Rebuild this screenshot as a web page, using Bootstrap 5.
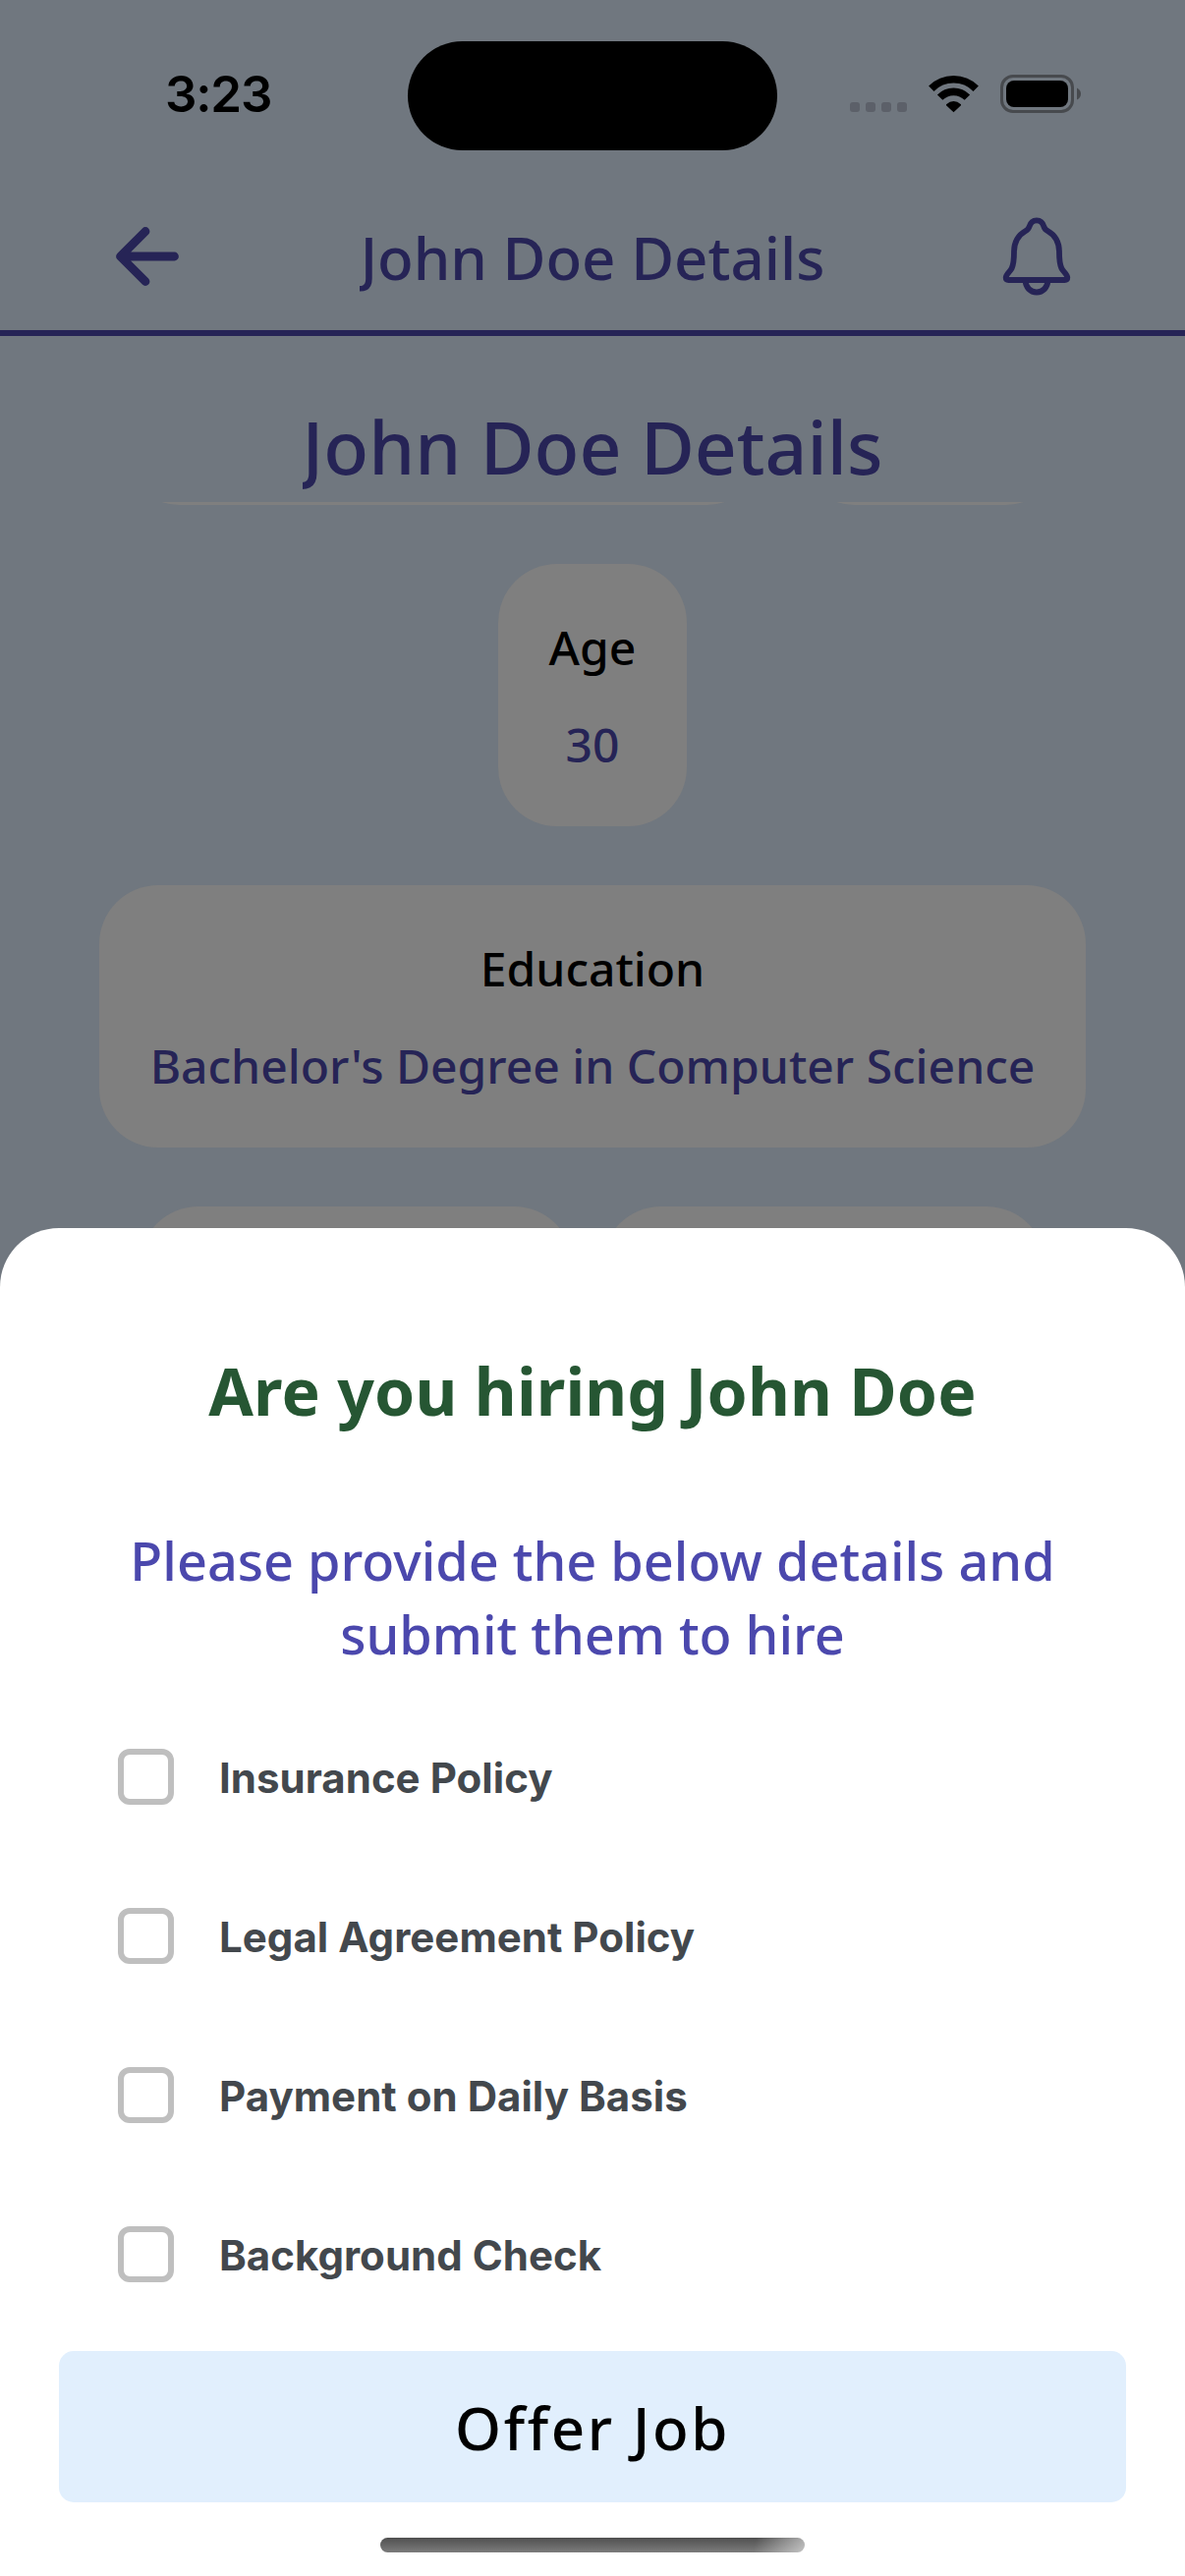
<!DOCTYPE html>
<html lang="en">
<head>
<meta charset="utf-8">
<meta name="viewport" content="width=device-width, initial-scale=1">
<title>John Doe Details</title>
<link href="https://cdn.jsdelivr.net/npm/bootstrap@5.3.0/dist/css/bootstrap.min.css" rel="stylesheet">
<style>
  :root { --ink: #262456; --dim: #70777f; --tile: #7f7f7f; }
  body { margin: 0; font-family: "Noto Sans", sans-serif; font-weight: 500; }
  .phone { width: 1206px; height: 2622px; background: var(--dim); color: var(--ink); }
  .statusbar { height: 186px; }
  .clock { font: 600 51px/60px Inter, sans-serif; color: #000; margin-left: 168px; margin-top: 66px; letter-spacing: -1.2px; }
  .island { width: 376px; height: 111px; border-radius: 56px; left: 415px; top: 42px; background: #000; }
  .status-icons { margin-top: 72px; margin-right: 104px; }
  .topbar { height: 156px; border-bottom: 6px solid var(--ink); padding: 0 114px 0 115px; }
  .topbar-title { font-size: 60px; line-height: 82px; padding-top: 2px; }
  .page-title { height: 169px; padding-top: 55px; font-size: 75px; line-height: 115px; }
  .clip { display: inline-block; overflow: hidden; vertical-align: top; }
  .topbar-title .clip { padding: 0 1px; }
  .sliver { height: 3px; gap: 31px; }
  .tile { background: var(--tile); border-radius: 60px; height: 267px; padding: 0 51px; gap: 34px; font-size: 48px; line-height: 65px; }
  .sheet { height: 1372px; border-radius: 60px 60px 0 0; background: #fff; padding: 0 60px; }
  .sheet-title { font-size: 66px; font-weight: 700; line-height: 90px; color: #265633; margin-top: 120px; letter-spacing: .15px; }
  .sheet-text { font-size: 54px; line-height: 75px; color: #4b48ad; margin-top: 91px; margin-bottom: 26px; }
  .option { height: 162px; padding-left: 60px; gap: 46px; font: 700 42px/60px Inter, sans-serif; letter-spacing: .03px; color: #43484d; }
  .option span { padding-top: 3px; }
  .option .form-check-input { width: 57px; height: 57px; border: 6px solid #bfbfbf; border-radius: 12px; }
  .offer { height: 154px; border-radius: 15px; background: #e1effd; font-size: 60px; line-height: 82px; font-weight: 500; letter-spacing: 2.6px; margin-top: 18px; font-family: inherit; }
  .offer span { display: block; padding-top: 2px; }
  .home-bar { width: 432px; height: 15px; border-radius: 8px; margin: 36px auto 0;
    background: linear-gradient(100deg, transparent 88%, rgba(255,255,255,.55) 100%), linear-gradient(#505050, #7c7c7c); }
</style>
</head>
<body>
<div class="phone position-relative overflow-hidden">
  <div class="statusbar d-flex justify-content-between align-items-start">
    <div class="clock">3:23</div>
    <div class="island position-absolute"></div>
    <svg class="status-icons" width="238" height="48" viewBox="864 72 238 48">
      <g fill="#5c6069"><rect x="865" y="104" width="10" height="10" rx="3"/><rect x="881" y="104" width="10" height="10" rx="3"/><rect x="897" y="104" width="10" height="10" rx="3"/><rect x="913" y="104" width="10" height="10" rx="3"/></g>
      <g fill="none" stroke="#000" stroke-width="7.6">
        <path d="M947.8 90.2a32 32 0 0 1 45.400 0"/>
        <path d="M956.6 99.200a19.500 19.500 0 0 1 27.800 0"/>
      </g>
      <path d="M963 106.300q7.500-6.500 15 0l0 1-7.500 7-7.500-7z"/>
      <rect x="1019.500" y="77.500" width="72" height="36" rx="11.500" fill="none" stroke="#474a4e" stroke-width="3"/>
      <rect x="1024" y="82" width="63" height="27" rx="8"/>
      <path d="M1096 89.500q4 2 4 6t-4 6z" fill="#474a4e"/>
    </svg>
  </div>

  <header class="topbar d-flex justify-content-between align-items-center position-relative">
    <svg width="70" height="66" viewBox="115 228 70 66" fill="none" stroke="#262456" stroke-width="8.800" stroke-linecap="round" stroke-linejoin="round"><path d="M148 235.500L122.500 261l25.500 25.500M123 261h54.500"/></svg>
    <div class="topbar-title position-absolute start-0 end-0 text-center"><span class="clip">John Doe Details</span></div>
    <svg width="74" height="84" viewBox="1018 219 74 84" fill="none" stroke="#262456" stroke-width="5.800" stroke-linejoin="round"><path d="M1055 224.300c-4 0-6.500 3-7.500 6.500-.7 2.300-2 3.300-4 4.400-8.500 4.800-11.500 11.500-11.500 21.300 0 8-.5 12.500-2.300 16.500-1.700 3.700-6 6-6 9.500 0 1.500 1 2.500 2.800 2.500h57c1.800 0 2.800-1 2.800-2.500 0-3.500-4.300-5.800-6-9.500-1.800-4-2.300-8.500-2.300-16.500 0-9.800-3-16.500-11.500-21.300-2-1.100-3.300-2.100-4-4.400-1-3.500-3.500-6.500-7.500-6.500z"/><path d="M1043.700 285.500c0 7 5 12 11.300 12s11.300-5 11.300-12"/></svg>
  </header>

  <div class="page-title text-center"><span class="clip">John Doe Details</span></div>

  <main class="d-flex flex-column align-items-center">
    <div class="sliver d-flex align-items-end overflow-hidden">
      <div class="tile" style="width:656px"></div>
      <div class="tile" style="width:273px"></div>
    </div>
    <div class="tile d-flex flex-column justify-content-center text-center" style="margin-top:60px;width:192px">
      <div class="text-black">Age</div><div>30</div>
    </div>
    <div class="tile d-flex flex-column justify-content-center text-center text-nowrap" style="margin-top:60px;width:1004px">
      <div class="text-black">Education</div><div>Bachelor's Degree in Computer Science</div>
    </div>
    <div class="d-flex" style="margin-top:60px;gap:30px">
      <div class="tile" style="width:441px"></div>
      <div class="tile" style="width:451px"></div>
    </div>
  </main>

  <section class="sheet position-absolute bottom-0 start-0 w-100 d-flex flex-column">
    <div class="sheet-title text-center">Are you hiring John Doe</div>
    <div class="sheet-text text-center">Please provide the below details and<br>submit them to hire</div>
    <label class="option d-flex align-items-center"><input class="form-check-input m-0 flex-shrink-0" type="checkbox"><span>Insurance Policy</span></label>
    <label class="option d-flex align-items-center"><input class="form-check-input m-0 flex-shrink-0" type="checkbox"><span>Legal Agreement Policy</span></label>
    <label class="option d-flex align-items-center"><input class="form-check-input m-0 flex-shrink-0" type="checkbox"><span>Payment on Daily Basis</span></label>
    <label class="option d-flex align-items-center"><input class="form-check-input m-0 flex-shrink-0" type="checkbox"><span>Background Check</span></label>
    <button type="button" class="offer btn w-100 p-0 border-0 text-black"><span>Offer Job</span></button>
    <div class="home-bar"></div>
  </section>
</div>
<script src="https://cdn.jsdelivr.net/npm/bootstrap@5.3.0/dist/js/bootstrap.bundle.min.js"></script>
</body>
</html>
